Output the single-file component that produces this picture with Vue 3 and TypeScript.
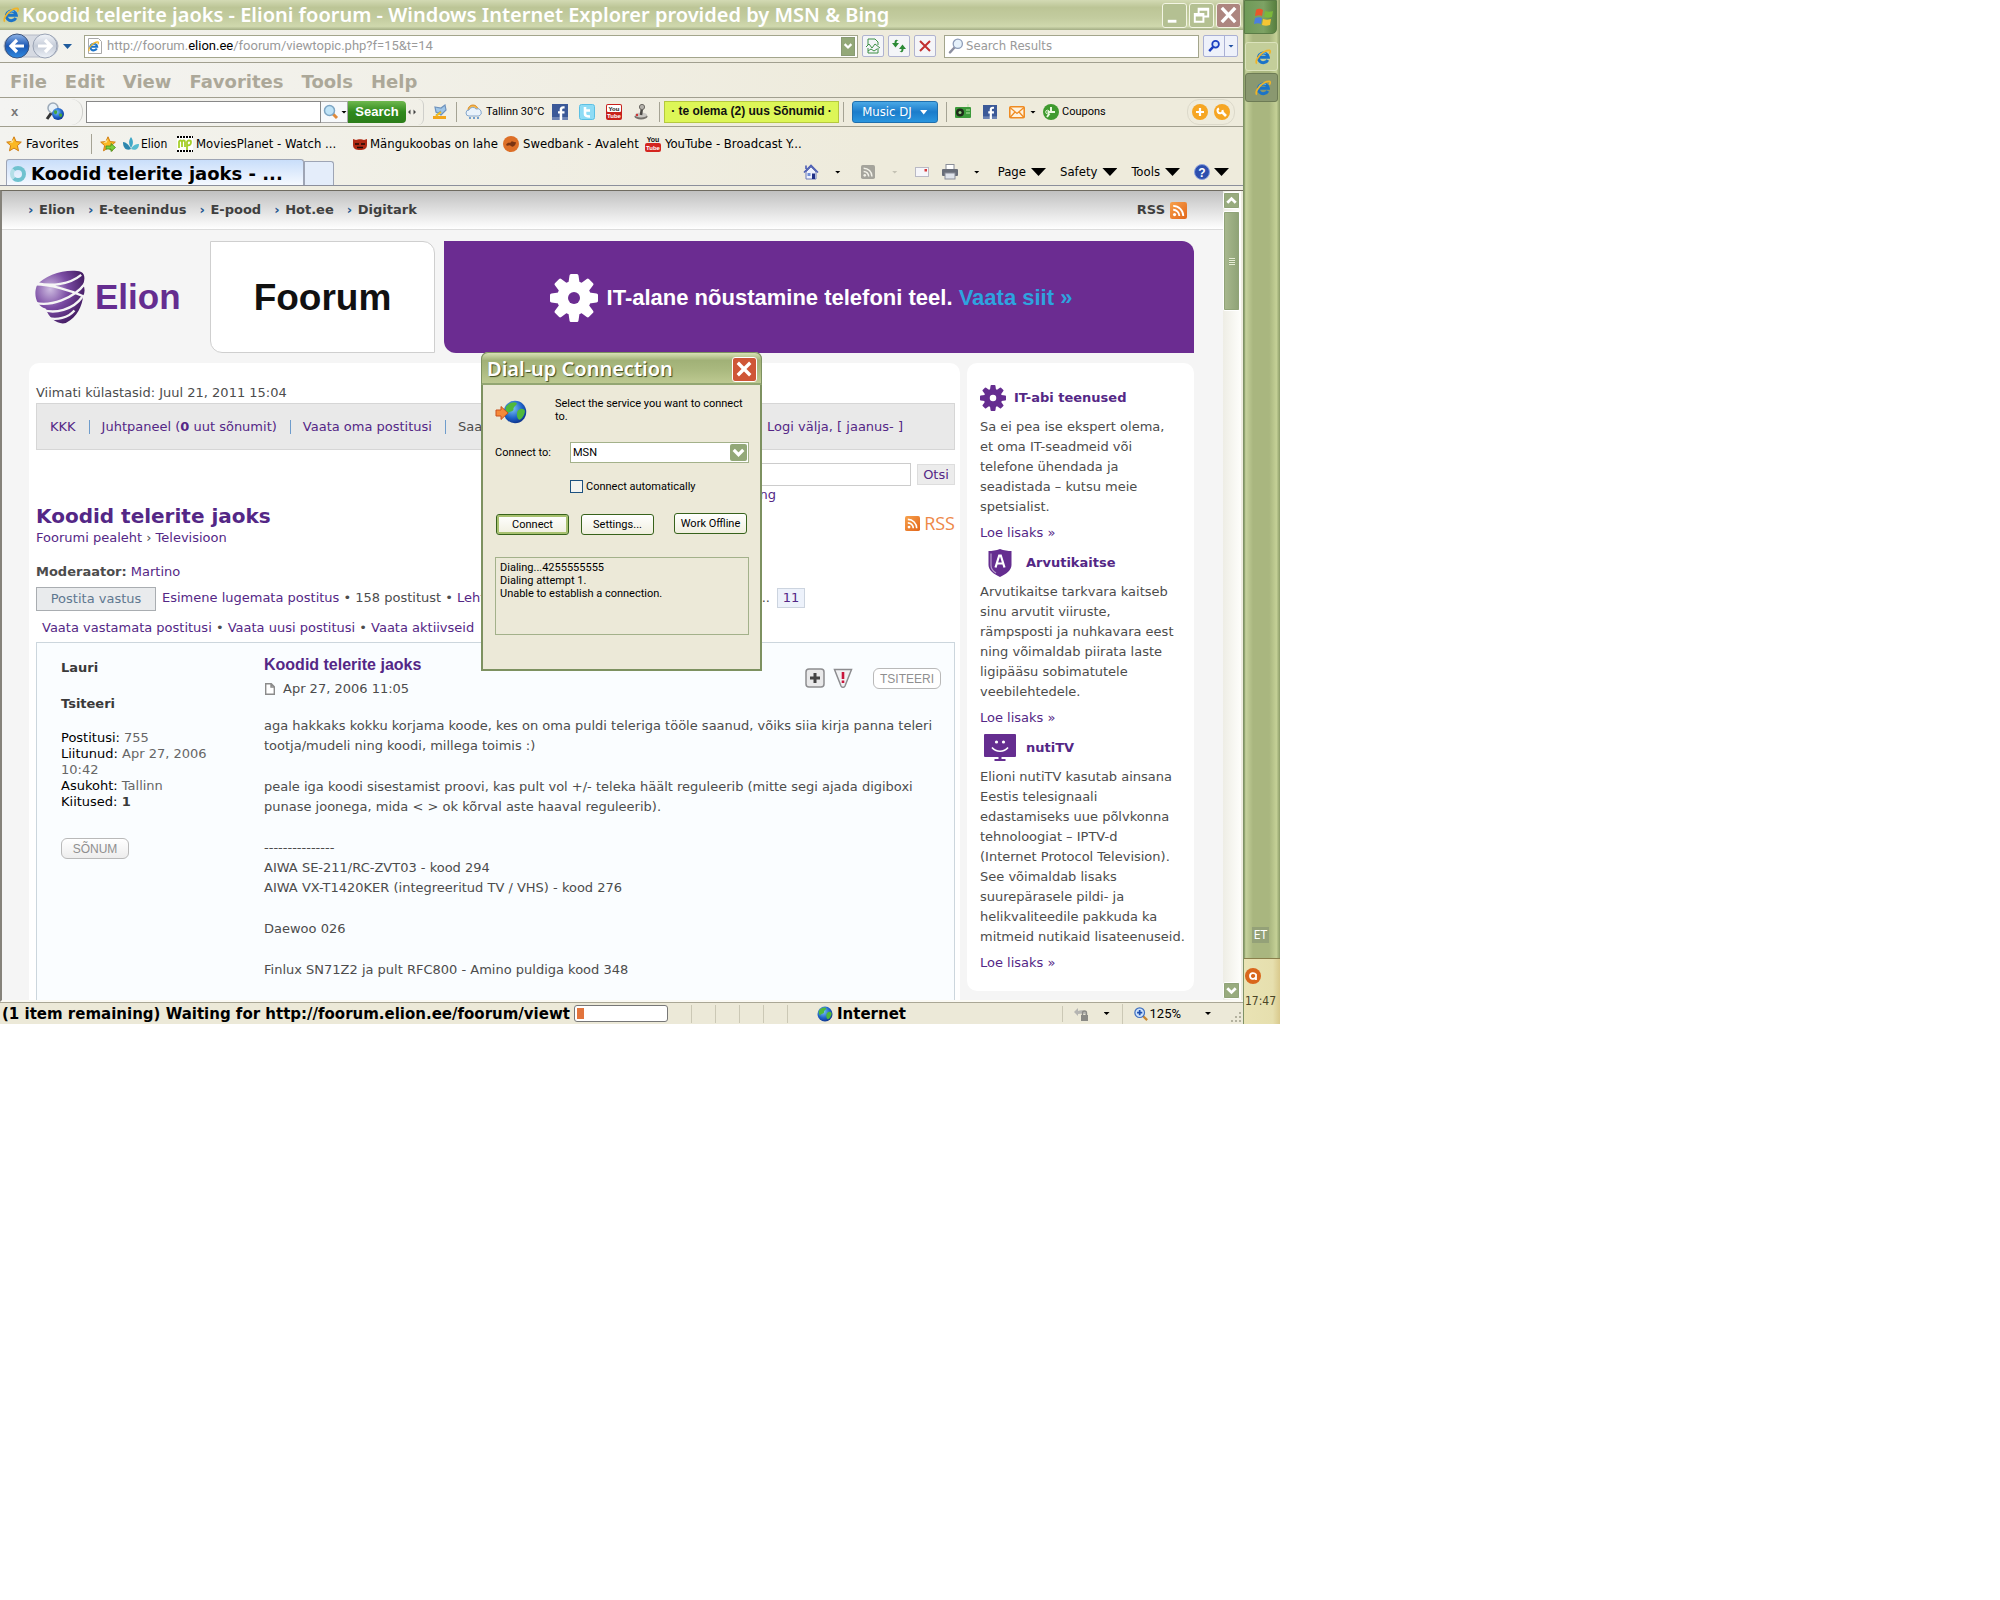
<script setup lang="ts">
import { ref } from 'vue'

interface Service {
  title: string
  icon: string
  wide: boolean
  lines: string[]
}

const menus = ['File', 'Edit', 'View', 'Favorites', 'Tools', 'Help']
const siteLinks = ['Elion', 'E-teenindus', 'E-pood', 'Hot.ee', 'Digitark']
const commands = ['Page', 'Safety', 'Tools']

const services: Service[] = [
  {
    title: 'IT-abi teenused',
    icon: 'i-gear',
    wide: false,
    lines: ['Sa ei pea ise ekspert olema,', 'et oma IT-seadmeid või', 'telefone ühendada ja', 'seadistada – kutsu meie', 'spetsialist.'],
  },
  {
    title: 'Arvutikaitse',
    icon: 'i-shield',
    wide: true,
    lines: ['Arvutikaitse tarkvara kaitseb', 'sinu arvutit viiruste,', 'rämpsposti ja nuhkavara eest', 'ning võimaldab piirata laste', 'ligipääsu sobimatutele', 'veebilehtedele.'],
  },
  {
    title: 'nutiTV',
    icon: 'i-tv',
    wide: true,
    lines: ['Elioni nutiTV kasutab ainsana', 'Eestis telesignaali', 'edastamiseks uue põlvkonna', 'tehnoloogiat – IPTV-d', '(Internet Protocol Television).', 'See võimaldab lisaks', 'suurepärasele pildi- ja', 'helikvaliteedile pakkuda ka', 'mitmeid nutikaid lisateenuseid.'],
  },
]

const postParagraphs: string[][] = [
  ['aga hakkaks kokku korjama koode, kes on oma puldi teleriga tööle saanud, võiks siia kirja panna teleri', 'tootja/mudeli ning koodi, millega toimis :)'],
  ['peale iga koodi sisestamist proovi, kas pult vol +/- teleka häält reguleerib (mitte segi ajada digiboxi', 'punase joonega, mida < > ok kõrval aste haaval reguleerib).'],
  ['---------------', 'AIWA SE-211/RC-ZVT03 - kood 294', 'AIWA VX-T1420KER (integreeritud TV / VHS) - kood 276'],
  ['Daewoo 026'],
  ['Finlux SN71Z2 ja pult RFC800 - Amino puldiga kood 348'],
]

const url = ref('')
const query = ref('')
const forumQuery = ref('')
const service = ref('MSN')
const autoConnect = ref(false)
</script>

<template>
  <svg class="defs" aria-hidden="true">
    <defs>
      <linearGradient id="g-blue" x1="0" y1="0" x2="0" y2="1"><stop offset="0" stop-color="#8fb4e8" /><stop offset=".5" stop-color="#1b57b4" /><stop offset="1" stop-color="#2f8be0" /></linearGradient>
      <linearGradient id="g-grey" x1="0" y1="0" x2="0" y2="1"><stop offset="0" stop-color="#f2f5fa" /><stop offset=".5" stop-color="#c5ccd8" /><stop offset="1" stop-color="#eef2f8" /></linearGradient>
      <linearGradient id="g-orange" x1="0" y1="0" x2="1" y2="1"><stop offset="0" stop-color="#f7a14c" /><stop offset="1" stop-color="#e2661a" /></linearGradient>
      <radialGradient id="g-globe" cx=".4" cy=".35" r=".7"><stop offset="0" stop-color="#7cc4f5" /><stop offset=".6" stop-color="#1e62c8" /><stop offset="1" stop-color="#0c2f86" /></radialGradient>
      <radialGradient id="g-elion" cx=".3" cy=".35" r=".8"><stop offset="0" stop-color="#cdbbe0" /><stop offset=".45" stop-color="#7a4ba3" /><stop offset="1" stop-color="#3a1457" /></radialGradient>
    </defs>
    <symbol id="i-ie" viewBox="0 0 16 16">
      <path d="M12.800 11A5 4.800 0 1 1 13.300 8.300H5" fill="none" stroke="#1b73c8" stroke-width="3" />
      <path d="M4 6.500C5 3.800 9 3.200 11 4.600" fill="none" stroke="#5bb8f0" stroke-width="1.200" />
      <path d="M1.800 14.600C-.8 11.500 7.500 1 14.400 1.300c1.200.5.9 2-.1 3.500" fill="none" stroke="#f0b429" stroke-width="1.700" />
    </symbol>
    <symbol id="i-rss" viewBox="0 0 16 16">
      <rect width="16" height="16" rx="2" fill="url(#g-orange)" />
      <circle cx="4.300" cy="11.800" r="1.500" fill="#fff" />
      <path d="M3 7.300a5.800 5.800 0 0 1 5.800 5.800M3 3.600a9.500 9.500 0 0 1 9.500 9.500" fill="none" stroke="#fff" stroke-width="1.700" />
    </symbol>
    <symbol id="i-rss-grey" viewBox="0 0 16 16">
      <rect width="16" height="16" rx="2" fill="#a5a49c" />
      <circle cx="4.300" cy="11.800" r="1.500" fill="#f2f1e8" />
      <path d="M3 7.300a5.800 5.800 0 0 1 5.800 5.800M3 3.600a9.500 9.500 0 0 1 9.500 9.500" fill="none" stroke="#f2f1e8" stroke-width="1.700" />
    </symbol>
    <symbol id="i-lens" viewBox="0 0 16 16">
      <path d="M6.500 9.500 2 14.400" stroke="#8c8fa0" stroke-width="2.400" stroke-linecap="round" />
      <circle cx="9.800" cy="5.800" r="4.600" fill="#e6f1fa" stroke="#8d9cb8" stroke-width="1.300" />
    </symbol>
    <symbol id="i-lens-blue" viewBox="0 0 16 16">
      <path d="M7 9 2.500 13.800" stroke="#1c3fc0" stroke-width="2.800" />
      <circle cx="9.800" cy="6" r="3.800" fill="#d8e6fb" stroke="#1c3fc0" stroke-width="2" />
    </symbol>
    <symbol id="i-star" viewBox="0 0 16 16">
      <path d="m8 .8 2.100 4.800 5.200.5-3.900 3.500 1.100 5.200L8 12.100l-4.500 2.700 1.100-5.200L.7 6.100l5.200-.5z" fill="#fbb822" stroke="#d07d12" />
      <path d="M8 3 6.800 6.500 3.500 7z" fill="#fde69a" />
    </symbol>
    <symbol id="i-globe" viewBox="0 0 16 16">
      <circle cx="8" cy="8" r="7.500" fill="url(#g-globe)" />
      <path d="M2 4.500C4 1.500 8 .8 9 2S6.800 4 7 6 3.500 7.500 3.500 9 1 8 2 4.500zM10 7c2-2 4-1 4.500 0S13.500 12 11.500 13 8.500 9 10 7z" fill="#4fb83c" />
    </symbol>
    <symbol id="i-fb" viewBox="0 0 16 16">
      <rect width="16" height="16" fill="#3b5998" />
      <rect y="13" width="16" height="3" fill="#6d84b4" />
      <path d="M10.200 16V9.600h2.300V7.200h-2.300V5.500c0-.8.5-1.200 2.400-1.100V2.200C9 1.800 7.700 3.200 7.700 5.300v1.900H6v2.400h1.700V16z" fill="#fff" />
    </symbol>
    <symbol id="i-gear" viewBox="0 0 48 48">
      <circle cx="24" cy="24" r="17" />
      <path v-for="a in [0, 45, 90, 135, 180, 225, 270, 315]" :key="a" d="M18 12 19.500 1.500Q19.700 0 21 0h6q1.300 0 1.500 1.500L30 12z" :transform="`rotate(${a} 24 24)`" />
      <circle cx="24" cy="24" r="6" fill="var(--hole)" />
    </symbol>
    <symbol id="i-shield" viewBox="0 0 24 28">
      <path d="M12 0c4 1.500 8 2 11.500 2v14c0 5-5 9-11.500 12C5.500 25 .5 21 .5 16V2C4 2 8 1.500 12 0z" />
      <path d="M3 4.500v12c0 3 2 5.500 5 7.500" fill="none" stroke="#b79ccb" stroke-width="1.200" />
      <path d="m7.500 18.500 3.700-12h1.600l3.700 12M9 14.500h6" fill="none" stroke="#fff" stroke-width="2.200" />
    </symbol>
    <symbol id="i-tv" viewBox="0 0 32 28">
      <rect width="32" height="23" rx="1" />
      <path d="M14.500 22h3v3h4v2h-11v-2h4z" />
      <circle cx="12.500" cy="8" r="1.600" fill="#fff" /><circle cx="19.500" cy="8" r="1.600" fill="#fff" />
      <path d="M8 13.500c4 5 12 5 16 0" fill="none" stroke="#fff" stroke-width="1.600" />
    </symbol>
    <symbol id="i-chev" viewBox="0 0 16 16">
      <path d="m3.500 5.500 4.500 4.500 4.500-4.500" fill="none" stroke="#fff" stroke-width="3" />
    </symbol>
  </svg>

  <div class="desktop">
    <div class="browser">
      <header class="titlebar">
        <svg class="ic16"><use href="#i-ie" /></svg>
        <h1>Koodid telerite jaoks - Elioni foorum - Windows Internet Explorer provided by MSN &amp; Bing</h1>
        <button class="win" aria-label="Minimize"><svg viewBox="0 0 24 24"><path d="M5 18h9" stroke="#fff" stroke-width="3" /></svg></button>
        <button class="win" aria-label="Restore"><svg viewBox="0 0 24 24"><path d="M9 10V5h10v8h-4M9 6h10M5 10.500h9v8H5zM5 12h9" fill="none" stroke="#fff" stroke-width="2" /></svg></button>
        <button class="win close" aria-label="Close"><svg viewBox="0 0 24 24"><path d="m5 4 14 15M19 4 5 19" stroke="#fff" stroke-width="3.500" /></svg></button>
      </header>

      <div class="addressbar">
        <svg class="nav" viewBox="0 0 72 28">
          <rect x="2" y="3" width="54" height="22" rx="11" fill="#d6dae2" stroke="#b5bac6" />
          <circle cx="15" cy="14" r="12" fill="url(#g-blue)" stroke="#3c557f" />
          <path d="M22 14H9m6-6-6 6 6 6" fill="none" stroke="#fff" stroke-width="3.200" />
          <circle cx="43" cy="14" r="12" fill="url(#g-grey)" stroke="#9aa3b4" />
          <path d="M36 14h13m-6-6 6 6-6 6" fill="none" stroke="#fff" stroke-width="3.200" />
          <path d="M61 12h9l-4.500 5z" fill="#1f5b9c" />
        </svg>
        <div class="url field">
          <svg class="ic16" viewBox="0 0 16 16"><path d="M1.500.5h10l3 3v12h-13z" fill="#fff" stroke="#a9a9a9" /><use href="#i-ie" x="1" y="3" width="11" height="11" /></svg>
          <label class="url-text"><span>http://foorum.<b>elion.ee</b>/foorum/viewtopic.php?f=15&amp;t=14</span><input v-model="url" aria-label="Address" /></label>
          <button class="drop" aria-label="Show address list"><svg><use href="#i-chev" /></svg></button>
        </div>
        <button class="tool" aria-label="Compatibility view"><svg viewBox="0 0 16 16"><path d="M3 7V1h7l3 3v3M3 10v5h10v-5M1 9l3-3 3 4 3-4 5 4M3 13l3-2 3 2 3-2" fill="none" stroke="#3d8f45" /></svg></button>
        <button class="tool" aria-label="Refresh"><svg viewBox="0 0 16 16"><path d="M7.500 2.500C5.500 2.500 5.500 4 5.500 5H8L4.500 9.500 1 5h2.500C3.500 2 5 1 7.500 2.500zM8.500 13.500c2 0 2-1.500 2-2.500H8l3.500-4.500L15 11h-2.500c0 3-1.500 4-4 2.500z" fill="#2b8a35" /></svg></button>
        <button class="tool" aria-label="Stop"><svg viewBox="0 0 16 16"><path d="m3 3 10 10M13 3 3 13" stroke="#c22f2f" stroke-width="2" /></svg></button>
        <div class="search field">
          <svg class="ic16"><use href="#i-lens" /></svg>
          <input v-model="query" placeholder="Search Results" aria-label="Search Results" />
        </div>
        <div class="go">
          <button aria-label="Search"><svg class="ic14"><use href="#i-lens-blue" /></svg></button>
          <button class="more" aria-label="Search options"><i class="tri blue"></i></button>
        </div>
      </div>

      <nav class="menubar">
        <a v-for="m in menus" :key="m" href="#">{{ m }}</a>
      </nav>

      <div class="toolbar">
        <button class="x" aria-label="Close toolbar">x</button>
        <svg class="bing" viewBox="0 0 22 20"><path d="M8 10 3 17" stroke="#333" stroke-width="3" /><circle cx="9" cy="6" r="5" fill="#e8f1f8" stroke="#9ba9b8" stroke-width="1.500" /><circle cx="14" cy="12" r="6" fill="url(#g-globe)" /><path d="M10 9c2-2 4 0 3 2s-3 2-3-2zM15 12c2-1 4 0 3 2s-3 1-3-2z" fill="#46a53a" /></svg>
        <span class="bracket"></span>
        <div class="tb-search">
          <input aria-label="Toolbar search" />
          <button class="kind" aria-label="Search type"><svg viewBox="0 0 16 16" class="ic16"><path d="m9 9 5 5" stroke="#e08a3a" stroke-width="3" /><circle cx="6.500" cy="6.500" r="5" fill="#bfe3f7" stroke="#7ea6c4" stroke-width="1.500" /></svg><i class="tri"></i></button>
          <button class="green">Search</button>
        </div>
        <svg class="grip" viewBox="0 0 12 8"><path d="M4.500 1.500 2 4l2.500 2.500zM7.500 1.500 10 4 7.500 6.500z" fill="#444" /></svg>
        <span class="bracket short"></span>
        <svg class="marker" viewBox="0 0 16 16"><path d="M1 13.500h13" stroke="#f3a61c" stroke-width="3" /><path d="m4 11 5-4M3 3l6 1 4-3 1 5-5 5-5-3z" fill="#9fc6e8" stroke="#6f93bd" stroke-width="1.200" /><path d="m4 12 5-4" stroke="#f3c01c" stroke-width="2" /></svg>
        <i class="bar"></i>
        <svg class="weather" viewBox="0 0 18 16"><circle cx="8" cy="6" r="5" fill="#f6b94e" stroke="#d98b25" /><path d="M4 12a3 3 0 0 1 0-6 4 4 0 0 1 7-1 3.500 3.500 0 0 1 3 7z" fill="#e9f2fb" stroke="#86a7cc" /><path d="M5 13v2M9 13v2M13 13v2" stroke="#4c86c6" stroke-width="1.500" /></svg>
        <span class="temp">Tallinn 30°C</span>
        <svg class="ic16 s1"><use href="#i-fb" /></svg>
        <svg class="ic16 s2" viewBox="0 0 16 16"><rect x=".5" y=".5" width="15" height="15" rx="2" fill="#8fdcf5" stroke="#5cc0e4" /><path d="M6 3v7c0 2 1.500 2.500 5 2.500M6 6.500h5" fill="none" stroke="#fff" stroke-width="2.600" /></svg>
        <svg class="ic16 s2" viewBox="0 0 16 16"><rect width="16" height="16" rx="2" fill="#c8201c" /><rect x="1" y="1" width="14" height="7" rx="1" fill="#fff" /><text x="8" y="7" font-size="6" fill="#111" class="yt">You</text><text x="8" y="14" font-size="6" fill="#fff" class="yt">Tube</text></svg>
        <svg class="ic16 s2" viewBox="0 0 16 16"><ellipse cx="8" cy="12.500" rx="6.500" ry="3" fill="#76736d" /><ellipse cx="8" cy="11" rx="6" ry="2.500" fill="#c9c7c2" /><path d="m8 11 1-7" stroke="#4c4a46" stroke-width="2.500" /><circle cx="9" cy="3" r="2.600" fill="#b5b2ac" stroke="#6c6963" /><circle cx="4" cy="11" r="1.200" fill="#c33" /></svg>
        <i class="bar b2"></i>
        <a class="notice" href="#">· te olema (2) uus Sõnumid ·</a>
        <i class="bar b3"></i>
        <button class="music">Music DJ <i class="tri white"></i></button>
        <i class="bar b4"></i>
        <svg class="ic16 s3" viewBox="0 0 16 16"><rect x="0" y="3" width="16" height="11" rx="1" fill="#3c9a3b" /><circle cx="5" cy="8.500" r="4" fill="#1f2a1b" /><circle cx="5" cy="8.500" r="1.500" fill="#8fd07c" /><path d="M11 6h4M11 9h4M13 3V0" stroke="#b8e6a6" /></svg>
        <svg class="ic14 s4"><use href="#i-fb" /></svg>
        <svg class="ic16 s4" viewBox="0 0 16 16"><rect x=".8" y="2.800" width="14.400" height="11" rx="1" fill="#fff3df" stroke="#ef8b22" stroke-width="1.600" /><path d="m1 3.500 7 6 7-6M1 13.500 6 8M15 13.500 10 8" fill="none" stroke="#ef8b22" stroke-width="1.300" /></svg>
        <i class="tri"></i>
        <svg class="ic16 s5" viewBox="0 0 16 16"><circle cx="8" cy="8" r="8" fill="#3f9a2f" /><path d="M8 3v6M4.500 8h7.500M6.500 9.500 4 13" stroke="#e9f9df" stroke-width="2" /><circle cx="4.500" cy="8" r="1.800" fill="none" stroke="#e9f9df" /></svg>
        <span class="coupons">Coupons</span>
        <div class="orbs">
          <svg class="ic16" viewBox="0 0 16 16"><circle cx="8" cy="8" r="8" fill="#f6a623" /><path d="M8 4v8M4 8h8" stroke="#fff" stroke-width="2.200" /></svg>
          <svg class="ic16" viewBox="0 0 16 16"><circle cx="8" cy="8" r="8" fill="#f6a623" /><path d="m8 8 4 4" stroke="#fff" stroke-width="2.600" /><path d="M5 4.500A2.500 2.500 0 1 0 8.500 6" fill="none" stroke="#fff" stroke-width="2" /></svg>
        </div>
      </div>

      <div class="favbar">
        <a href="#" class="fav"><svg class="ic16"><use href="#i-star" /></svg>Favorites</a>
        <i class="bar"></i>
        <svg class="ic16 add" viewBox="0 0 16 16"><use href="#i-star" /><path d="M6 10h5V7.500l4.500 4-4.500 4V13H6z" fill="#7ccf3a" stroke="#3f8e1c" stroke-width=".8" /></svg>
        <a href="#" class="fav f1"><svg class="ic16" viewBox="0 0 16 16"><path d="M8 1c3 4 2 8 0 11C6 9 5 5 8 1z" fill="#3fa7c6" /><path d="M0 6c3 0 6 3 8 7-4 2-8 0-8-7z" fill="#2c86ad" /><path d="M16 8c-3 0-6 1-8 5 4 2 8 0 8-5z" fill="#57bcd0" /></svg>Elion</a>
        <a href="#" class="fav f2"><svg class="ic16" viewBox="0 0 16 16"><rect width="16" height="16" fill="#fff" /><path d="M0 1h16M0 15h16" stroke="#000" stroke-width="2" stroke-dasharray="2 1" /><path d="M2 12V6c0-2 3-2 3 0v5V6c0-2 3-2 3 0v5M10 14V6c0-2 4-2 4 0s-1 4-4 3" fill="none" stroke="#a6cf2a" stroke-width="1.800" /></svg>MoviesPlanet - Watch ...</a>
        <a href="#" class="fav f3"><svg class="ic16" viewBox="0 0 16 16"><path d="M1 3l3 1c2-1 6-1 8 0l3-1v6c0 4-3 5-7 5s-7-1-7-5z" fill="#b02a14" /><path d="M3 8h4M9 8h4M5 11.500h6" stroke="#1c0a06" stroke-width="1.500" /></svg>Mängukoobas on lahe</a>
        <a href="#" class="fav f4"><svg class="ic16" viewBox="0 0 16 16"><circle cx="8" cy="8" r="8" fill="#dd6f27" /><path d="M3 9c2-4 4-1 5-3s3 1 5 0c0 3-3 6-5 4s-3 1-5-1z" fill="#7a3412" /></svg>Swedbank - Avaleht</a>
        <a href="#" class="fav f5"><svg class="ic16" viewBox="0 0 16 16"><text x="8" y="6" font-size="7" fill="#111" class="yt">You</text><rect y="7" width="16" height="9" rx="2" fill="#d4251f" /><text x="8" y="14" font-size="6" fill="#fff" class="yt">Tube</text></svg>YouTube - Broadcast Y...</a>
      </div>

      <div class="tabrow">
        <div class="tab"><i class="ring"></i><span>Koodid telerite jaoks - ...</span></div>
        <div class="newtab"></div>
        <div class="cmds">
          <svg class="ic16" viewBox="0 0 16 16"><path d="M3 8v7h10V8L8 3z" fill="#eef1fb" stroke="#6d7ab8" /><path d="M1 8.500 8 1.500l7 7M3 5V1.500" fill="none" stroke="#4a5cb4" stroke-width="1.600" /><rect x="9" y="9.500" width="3" height="5.500" fill="#1e2f86" /><rect x="4.500" y="9" width="3" height="3" fill="#6f8ed6" /></svg>
          <i class="tri c1"></i>
          <svg class="ic14 c2"><use href="#i-rss-grey" /></svg>
          <i class="tri c3 dim"></i>
          <svg class="ic14 c4" viewBox="0 0 14 14"><rect x=".5" y="2.500" width="13" height="9" fill="#f6f6fa" stroke="#b9b9c4" /><rect x="9.500" y="4" width="2.500" height="2.500" fill="#d6383a" /></svg>
          <svg class="ic16 c5" viewBox="0 0 16 16"><rect x="4" y=".5" width="8" height="6" fill="#fff" stroke="#8a8e98" /><rect x="0" y="5" width="16" height="7" rx="1" fill="#686d78" /><rect x="3" y="9" width="10" height="6" fill="#dfe3ea" stroke="#8a8e98" /></svg>
          <i class="tri c6"></i>
          <button v-for="c in commands" :key="c" class="cmd">{{ c }}<i class="tri big"></i></button>
          <button class="cmd help" aria-label="Help"><svg class="ic16" viewBox="0 0 16 16"><circle cx="8" cy="8" r="7.500" fill="#2d4fae" stroke="#8aa0dd" /><text x="8" y="12.500" font-size="12" fill="#fff" class="yt">?</text></svg><i class="tri big"></i></button>
        </div>
      </div>

      <div class="viewport">
        <main class="page">
          <div class="sitebar">
            <a v-for="l in siteLinks" :key="l" href="#"><i>›</i>{{ l }}</a>
            <a class="rss" href="#">RSS <svg><use href="#i-rss" /></svg></a>
          </div>

          <div class="heads">
            <a class="logo" href="#">
              <svg viewBox="0 0 52 56">
                <path d="M2 16C10 5 34-2 48 2c4 2 4 8 2 13 2 4 2 8 0 12-1 10-6 22-18 28-8 2-17-4-21-15C2 38-2 26 2 16z" fill="url(#g-elion)" />
                <path d="M3 14c14 3 33 1 45-9M1 15c14 0 36 6 51 13M0 34c16 4 40-4 52-20M8 41c12 5 32 0 41-13M14 50c9 2 20 0 27-8" fill="none" stroke="#f5f5f5" stroke-width="2.400" />
              </svg>
              <span>Elion</span>
            </a>
            <div class="forum-card">Foorum</div>
            <a class="banner" href="#">
              <svg><use href="#i-gear" /></svg>
              <span>IT-alane nõustamine telefoni teel. <em>Vaata siit »</em></span>
            </a>
          </div>

          <div class="cols">
            <section class="content">
              <p class="visited">Viimati külastasid: Juul 21, 2011 15:04</p>
              <nav class="usernav">
                <a href="#">KKK</a>
                <a href="#">Juhtpaneel (<b>0</b> uut sõnumit)</a>
                <a href="#">Vaata oma postitusi</a>
                <span>Saadetud</span>
                <a class="logout" href="#">Logi välja, [ jaanus- ]</a>
              </nav>
              <form class="forum-search" @submit.prevent>
                <input v-model="forumQuery" aria-label="Otsi" />
                <button>Otsi</button>
              </form>
              <a class="advanced" href="#">Täpsem otsing</a>
              <div class="topic">
                <div>
                  <h2>Koodid telerite jaoks</h2>
                  <p class="crumbs"><a href="#">Foorumi pealeht</a> › <a href="#">Televisioon</a></p>
                </div>
                <a class="feed" href="#"><svg><use href="#i-rss" /></svg>RSS</a>
              </div>
              <p class="mods"><b>Moderaator:</b> <a href="#">Martino</a></p>
              <div class="pager">
                <button>Postita vastus</button>
                <span><a href="#">Esimene lugemata postitus</a> • 158 postitust • <a href="#">Leht</a></span>
                <span class="dots">...</span>
                <a class="num" href="#">11</a>
              </div>
              <p class="views"><a href="#">Vaata vastamata postitusi</a> • <a href="#">Vaata uusi postitusi</a> • <a href="#">Vaata aktiivseid</a></p>

              <article class="post">
                <aside>
                  <b class="author">Lauri</b>
                  <b class="author">Tsiteeri</b>
                  <p>
                    <span>Postitusi:</span> 755<br />
                    <span>Liitunud:</span> Apr 27, 2006<br />10:42<br />
                    <span>Asukoht:</span> Tallinn<br />
                    <span>Kiitused:</span> <b>1</b>
                  </p>
                  <button class="pill">SÕNUM</button>
                </aside>
                <div class="body">
                  <header>
                    <div>
                      <h3>Koodid telerite jaoks</h3>
                      <p class="date"><svg viewBox="0 0 10 12"><path d="M.7.7h5.600l3 3v7.600H.7zM6 1v3h3" fill="#fff" stroke="#8b8b8b" stroke-width="1.400" /></svg>Apr 27, 2006 11:05</p>
                    </div>
                    <div class="actions">
                      <svg class="act" viewBox="0 0 20 20"><rect x="1" y="1" width="18" height="18" rx="3" fill="#e9e9ea" stroke="#8d8d90" stroke-width="1.500" /><path d="M10 5v10M5 10h10" stroke="#444" stroke-width="3" /></svg>
                      <svg class="act" viewBox="0 0 20 20"><path d="M1.500 1.500h17L12 18a2.200 2.200 0 0 1-4 0z" fill="#f1f1f3" stroke="#8d8d90" stroke-width="1.500" /><path d="M10 4v7M10 12.500v2.500" stroke="#c8143c" stroke-width="2.600" /></svg>
                      <button class="pill">TSITEERI</button>
                    </div>
                  </header>
                  <p v-for="(lines, i) in postParagraphs" :key="i" class="para">
                    <template v-for="line in lines" :key="line">{{ line }}<br /></template>
                  </p>
                </div>
              </article>
            </section>

            <aside class="side">
              <section v-for="s in services" :key="s.title" :class="{ wide: s.wide }">
                <h4><svg><use :href="'#' + s.icon" /></svg>{{ s.title }}</h4>
                <p><template v-for="line in s.lines" :key="line">{{ line }}<br /></template></p>
                <a href="#">Loe lisaks »</a>
              </section>
            </aside>
          </div>
        </main>
        <div class="scroll">
          <button class="sb" aria-label="Scroll up"><svg class="up"><use href="#i-chev" /></svg></button>
          <div class="thumb"><i></i></div>
          <button class="sb end" aria-label="Scroll down"><svg><use href="#i-chev" /></svg></button>
        </div>
      </div>

      <footer class="status">
        <span class="msg">(1 item remaining) Waiting for http://foorum.elion.ee/foorum/viewt</span>
        <span class="progress"><i></i></span>
        <i v-for="n in 5" :key="n" class="sep"></i>
        <span class="zone"><svg class="ic16"><use href="#i-globe" /></svg>Internet</span>
        <span class="protect"><svg class="ic16" viewBox="0 0 16 16"><path d="M1 6l4-4v3c6-2 9 1 9 5-2-3-5-3-9-2v2z" fill="#b5b5b2" /><rect x="8" y="9" width="7" height="6" fill="#8a8a86" /><path d="M9.500 9V7a2 2 0 0 1 4 0v2" fill="none" stroke="#8a8a86" stroke-width="1.400" /></svg><i class="tri"></i></span>
        <span class="zoom"><svg class="ic14" viewBox="0 0 16 16"><path d="m10 10 5 5" stroke="#c9852f" stroke-width="2.600" /><circle cx="6.500" cy="6.500" r="5.500" fill="#cfe3fb" stroke="#3f6fc0" stroke-width="1.400" /><path d="M6.500 3.500v6M3.500 6.500h6" stroke="#1d4fb0" stroke-width="2" /></svg>125%<i class="tri"></i></span>
        <svg class="size" viewBox="0 0 12 12"><path d="M9 1h2M5 5h2M9 5h2M1 9h2M5 9h2M9 9h2" stroke="#b3b19f" stroke-width="2" /></svg>
      </footer>
    </div>

    <aside class="taskbar">
      <button class="start" aria-label="Start"><svg viewBox="0 0 20 20"><path d="M2 3c3-2 5-1 7 0L8 9C6 8 4 8 1 9z" fill="#e8562a" /><path d="M11 4c3 1 5 1 8 0l-1 6c-3 1-5 1-8 0z" fill="#7cb83a" /><path d="M1 11c3-1 5-1 7 0l-1 6c-2-1-4-1-7 0z" fill="#4a7fe0" /><path d="M9 12c3 1 5 1 8 0l-1 6c-3 1-5 1-8 0z" fill="#f6c634" /></svg></button>
      <button class="task" aria-label="Internet Explorer"><svg class="ic16"><use href="#i-ie" /></svg></button>
      <button class="task on" aria-label="Internet Explorer, active"><svg class="ic16"><use href="#i-ie" /></svg></button>
      <span class="lang">ET</span>
      <div class="tray">
        <svg class="ic16" viewBox="0 0 16 16"><circle cx="8" cy="8" r="8" fill="#d9661c" /><path d="M11 12V6.500C9 4 5 5 5 8s4 4 5.500 1.500" fill="none" stroke="#fff" stroke-width="1.800" /></svg>
        <time>17:47</time>
      </div>
    </aside>

    <div class="dialog" role="dialog" aria-label="Dial-up Connection">
      <header>
        <h2>Dial-up Connection</h2>
        <button aria-label="Close"><svg viewBox="0 0 24 24"><path d="m5 5 13 13M18 5 5 18" stroke="#fff" stroke-width="3.500" /></svg></button>
      </header>
      <div class="dlg">
        <div class="intro">
          <svg viewBox="0 0 32 26"><use href="#i-globe" x="8" y="0" width="24" height="24" /><path d="M1 10h5V6.500l7 6.500-7 6.500V16H1z" fill="#f58a3a" stroke="#c9501c" /></svg>
          <p>Select the service you want to connect to.</p>
        </div>
        <div class="row">
          <label for="svc">Connect to:</label>
          <span class="select"><select id="svc" v-model="service"><option>MSN</option></select><i><svg><use href="#i-chev" /></svg></i></span>
        </div>
        <label class="check"><input v-model="autoConnect" type="checkbox" />Connect automatically</label>
        <div class="btns">
          <button class="def">Connect</button>
          <button>Settings...</button>
          <button class="last">Work Offline</button>
        </div>
        <div class="log">Dialing...4255555555<br />Dialing attempt 1.<br />Unable to establish a connection.</div>
      </div>
    </div>
  </div>
</template>

<style>
body { background: #fff; }
</style>

<style scoped>
* { box-sizing: border-box; }
p, h1, h2, h3, h4 { margin: 0; }
button { padding: 0; border: 0; background: none; font: inherit; color: inherit; flex: none; }
input { min-width: 0; border: 0; padding: 0; background: none; font: inherit; outline: 0; }
a { color: #542786; text-decoration: none; }
svg { flex: none; display: block; }
.defs { position: absolute; width: 0; height: 0; }
.ic16 { width: 16px; height: 16px; }
.ic14 { width: 14px; height: 14px; }
.yt { font-family: "Liberation Sans", sans-serif; font-weight: 700; text-anchor: middle; }
.tri { flex: none; display: block; width: 6px; height: 3px; background: #000; clip-path: polygon(0 0, 100% 0, 50% 100%); }
.tri.big { width: 15px; height: 8px; }
.tri.white { width: 8px; height: 5px; background: #fff; }
.tri.blue { background: #1f4fa0; }
.tri.dim { background: #c4c2b4; }
.bar { flex: none; width: 1px; height: 20px; background: #a5a394; }

.desktop { position: relative; display: flex; width: 64vw; font: 13px/20px "DejaVu Sans", Verdana, sans-serif; color: #4c4c4c; }
.browser { flex: 1; min-width: 0; background: #efede0; border-right: 1px solid #7f9266; }

.titlebar { display: flex; align-items: center; height: 30px; padding: 0 2px 0 3px; background: linear-gradient(#d3dab4, #bcc596 25%, #c3cc9f 60%, #cfd8ad 88%, #a3ad84); }
.titlebar h1 { flex: 1; margin-left: 3px; font: 600 20px/28px "Noto Sans", sans-serif; color: #fff; white-space: nowrap; }
.win { width: 25px; height: 25px; margin-left: 2px; border: 1px solid #f3f5e4; border-radius: 3px; background: #b4c092; }
.win.close { background: #ad8680; }

.addressbar { display: flex; align-items: center; height: 33px; padding: 0 5px 0 2px; border-bottom: 1px solid #a19f8f; background: linear-gradient(90deg, #f3f3ef, #eeebdc 70%); }
.nav { width: 72px; height: 28px; }
.field { display: flex; align-items: center; height: 23px; border: 1px solid #a3a58c; background: #fff; }
.url { flex: 1; margin-left: 10px; padding: 0 2px; }
.url-text { position: relative; flex: 1; margin-left: 4px; font: 13px/20px Roboto, sans-serif; color: #9a9a9a; white-space: nowrap; }
.url-text b { font-weight: 400; color: #000; }
.url-text input { position: absolute; inset: 0; width: 100%; }
.drop { width: 14px; height: 19px; background: #93a878; border: 1px solid #8a9a74; }
.drop svg { width: 12px; height: 16px; }
.tool { display: grid; place-items: center; width: 22px; height: 22px; margin-left: 4px; border: 1px solid #b0b3cf; border-radius: 2px; background: #f4f5f8; }
.tool svg { width: 16px; height: 16px; }
.search { width: 255px; margin-left: 8px; padding: 0 3px; }
.search input { flex: 1; margin-left: 2px; font: 13px/20px "DejaVu Sans Condensed", Tahoma, sans-serif; }
.search input::placeholder { color: #999; opacity: 1; }
.go { display: flex; height: 22px; margin-left: 4px; border: 1px solid #aab0d4; border-radius: 2px; background: #eef1fa; }
.go button { display: grid; place-items: center; width: 20px; }
.go .more { width: 13px; border-left: 1px solid #aab0d4; }

.menubar { display: flex; align-items: center; gap: 18px; height: 35px; padding: 4px 10px 0; border-bottom: 1px solid #a19f8f; background: linear-gradient(90deg, #f4f4f2, #eeebdc 70%); font: 700 18px/24px "DejaVu Sans", sans-serif; }
.menubar a { color: #aca899; }

.toolbar { display: flex; align-items: center; height: 29px; padding: 0 8px 0 10px; border-bottom: 1px solid #a19f8f; background: linear-gradient(90deg, #f4f4f2, #eeebdc 70%); font: 12px/16px "DejaVu Sans Condensed", Tahoma, sans-serif; color: #000; }
.x { width: 9px; font: 700 13px/16px "Liberation Sans", sans-serif; color: #777; }
.bing { width: 22px; height: 20px; margin-left: 25px; }
.bracket { width: 17px; height: 26px; border-right: 1px solid #cfcfcb; border-radius: 0 12px 12px 0; }
.bracket.short { width: 6px; }
.tb-search { display: flex; height: 22px; margin-left: 3px; }
.tb-search input { width: 235px; border: 1px solid #888; background: #fff; }
.kind { display: flex; align-items: center; gap: 2px; width: 27px; padding-left: 2px; border: 1px solid #aaa; border-left: 0; background: #f7f9fb; }
.green { width: 58px; border-radius: 0 4px 4px 0; background: linear-gradient(#6fb84f, #2f8a1c 50%, #2c7d19); font: 700 13px/20px "Liberation Sans", sans-serif; color: #fff; }
.grip { width: 12px; height: 8px; }
.marker { width: 16px; height: 16px; margin-left: 8px; }
.toolbar > .bar { margin-left: 8px; }
.weather { width: 18px; height: 16px; margin-left: 8px; }
.temp { width: 63px; margin-left: 3px; font-family: Roboto, sans-serif; font-size: 11px; white-space: nowrap; }
.s1 { margin-left: 3px; }
.s2 { margin-left: 11px; }
.toolbar > .b2 { margin-left: 10px; }
.notice { width: 175px; height: 22px; margin-left: 4px; border: 1px solid #b5c93e; background: #ddf657; font: 700 12px/19px "Liberation Sans", sans-serif; color: #111; text-align: center; }
.toolbar > .b3 { margin-left: 4px; }
.music { display: flex; align-items: center; justify-content: center; gap: 8px; width: 86px; height: 22px; margin-left: 8px; border-radius: 3px; background: linear-gradient(#4aa9e6, #1b7ccb 50%, #2a95de); color: #fff; font-size: 13px; border: 1px solid #1f6fae; }
.s3 { margin-left: 8px; }
.s4 { margin-left: 12px; }
.s4 + .tri { margin-left: 5px; }
.s5 { margin-left: 7px; }
.coupons { margin-left: 3px; font-family: Roboto, sans-serif; font-size: 11px; }
.orbs { display: flex; gap: 6px; margin-left: auto; padding: 4px; border: 1px solid #dcd9ca; border-radius: 12px; }

.favbar { display: flex; align-items: center; height: 33px; padding: 0 8px 0 6px; background: linear-gradient(90deg, #f3f3ef, #eeebdc 70%); }
.fav { display: flex; align-items: center; gap: 4px; color: #000; font: 13px/18px "DejaVu Sans Condensed", Tahoma, sans-serif; white-space: nowrap; }
.fav:first-child { width: 73px; }
.favbar .bar { margin-left: 12px; }
.add { margin-left: 8px; }
.f1 { width: 54px; margin-left: 7px; gap: 2px; font-size: 12px; }
.f2 { width: 160px; gap: 3px; }
.f3 { width: 147px; margin-left: 15px; gap: 2px; }
.f4 { width: 136px; margin-left: 4px; }
.f5 { margin-left: 6px; }

.tabrow { display: flex; align-items: flex-end; height: 26px; padding-left: 6px; border-bottom: 1px solid #8b8f9c; background: linear-gradient(90deg, #f3f3ef, #eeebdc 70%); }
.tab { display: flex; align-items: center; gap: 5px; width: 298px; height: 26px; padding: 2px 0 0 3px; border: 1px solid #9ea5b5; border-bottom: 0; border-radius: 3px 3px 0 0; background: linear-gradient(#c9defa, #f5f9ff); font: 700 18px/24px "DejaVu Sans", sans-serif; color: #000; white-space: nowrap; }
.ring { width: 16px; height: 16px; border: 4px solid #6fc2cf; border-left-color: #b4dfe8; border-radius: 50%; }
.newtab { width: 30px; height: 24px; border: 1px solid #9ea5b5; border-bottom: 0; border-radius: 0 3px 0 0; background: #e4edfa; }
.cmds { display: flex; align-items: center; height: 26px; margin-left: auto; padding-right: 14px; font: 13px/18px "DejaVu Sans Condensed", Tahoma, sans-serif; color: #000; }
.c1 { margin-left: 16px; }
.c2 { margin-left: 20px; }
.c3 { margin-left: 17px; }
.c4 { margin-left: 17px; }
.c5 { margin-left: 13px; }
.c6 { margin: 0 18px 0 16px; }
.cmd { display: flex; align-items: center; gap: 5px; margin-right: 14px; }
.cmd.help { gap: 4px; margin: 0; }

.viewport { display: flex; margin-top: 4px; border-left: 2px solid #85827a; border-top: 1px solid #6f6b60; border-bottom: 2px solid #fbfaf4; }
.page { flex: 1; min-width: 0; background: #f5f5f5; }
.sitebar { display: flex; align-items: center; height: 39px; padding: 0 36px 0 26px; border-bottom: 1px solid #dcdcdc; background: linear-gradient(#c0c0c0, #fff); font-weight: 700; font-size: 13px; }
.sitebar a { display: flex; align-items: center; margin-right: 13px; color: #3f3f3f; }
.sitebar i { width: 11px; font-style: normal; color: #1b5590; }
.sitebar .rss { gap: 5px; margin: 0 0 0 auto; }
.rss svg { width: 17px; height: 17px; }
.heads { display: flex; height: 112px; margin: 11px 29px 0 32px; }
.logo { display: flex; align-items: center; gap: 9px; width: 176px; font: 700 35px/40px "Liberation Sans", sans-serif; color: #652d90; }
.logo svg { width: 52px; height: 54px; }
.forum-card { width: 225px; border: 1px solid #cfcfcf; border-radius: 0 12px 0 12px; background: #fff; font: 700 37px/112px "Liberation Sans", sans-serif; color: #111; text-align: center; }
.banner { --hole: #6b2c91; display: flex; flex: 1; align-items: center; justify-content: center; gap: 9px; margin-left: 9px; padding: 2px 16px 0 0; border-radius: 0 12px 0 12px; background: #6b2c91; font: 700 22px/28px "Liberation Sans", sans-serif; color: #fff; }
.banner svg { width: 48px; height: 48px; fill: #fff; }
.banner em { font-style: normal; color: #2ea3df; }
.cols { display: flex; gap: 7px; margin: 10px 29px 0 27px; }
.content { flex: 1; min-width: 0; padding: 20px 5px 0 7px; border-radius: 10px 10px 0 0; background: #fff; }
.visited { line-height: 20px; }
.usernav { display: flex; align-items: center; height: 47px; padding-left: 13px; border: 1px solid #d6d6d6; background: #e9e9e9; }
.usernav > * { white-space: nowrap; }
.usernav > :not(:first-child) { margin-left: 13px; padding-left: 12px; border-left: 1px solid #6e9ccc; line-height: 14px; }
.usernav > .logout { margin-left: auto; margin-right: 51px; border: 0; padding: 0; }
.forum-search { display: flex; justify-content: flex-end; gap: 6px; margin-top: 13px; }
.forum-search input { width: 300px; height: 23px; border: 1px solid #ccc; }
.forum-search button { width: 38px; height: 21px; margin-top: 1px; border: 1px solid #ddd; background: #ececec; color: #542786; line-height: 18px; }
.advanced { display: block; height: 18px; margin-right: 179px; line-height: 18px; text-align: right; }
.topic { display: flex; justify-content: space-between; }
.topic h2 { font-size: 20px; line-height: 24px; color: #542786; }
.crumbs { line-height: 20px; }
.feed { display: flex; gap: 4px; align-items: center; height: 20px; margin-top: 9px; color: #ee8848; font: 18px/20px "Open Sans", sans-serif; }
.feed svg { width: 15px; height: 15px; }
.mods { margin-top: 14px; line-height: 20px; }
.pager { display: flex; height: 28px; margin-top: 4px; }
.pager button { width: 120px; height: 24px; margin: 1px 6px 0 0; border: 1px solid #a9adb1; background: #e9ebed; color: #5f7890; }
.pager span { white-space: nowrap; line-height: 24px; }
.pager .dots { margin-left: auto; }
.num { width: 28px; height: 20px; margin: 2px 150px 0 7px; border: 1px solid #ccd4df; background: #edf2fb; line-height: 18px; text-align: center; }
.views { margin-top: 2px; padding-left: 6px; line-height: 24px; white-space: nowrap; }
.post { display: flex; margin-top: 2px; border: 1px solid #ccd6dd; border-bottom: 0; background: #fafdff; }
.post aside { width: 227px; padding: 15px 0 0 24px; color: #666; line-height: 16px; }
.post aside span { color: #000; }
.post aside b { color: #3a3a3a; }
.author { display: block; height: 36px; line-height: 20px; }
.post aside p { margin-bottom: 28px; }
.pill { width: 68px; height: 21px; border: 1px solid #b9b9b9; border-radius: 6px; background: linear-gradient(#fff, #ededed); color: #8f8f8f; font: 12px/18px "Liberation Sans", sans-serif; }
.body { flex: 1; min-width: 0; padding: 11px 13px 20px 0; }
.body header { display: flex; justify-content: space-between; margin-bottom: 14px; }
.body h3 { font: 700 16px/22px "Liberation Sans", sans-serif; color: #542786; }
.date { display: flex; align-items: center; gap: 8px; height: 26px; padding-left: 1px; }
.date svg { width: 10px; height: 12px; }
.actions { display: flex; gap: 8px; margin-top: 14px; height: 21px; }
.act { width: 20px; height: 20px; }
.actions .pill { margin-left: 12px; background: #fff; }
.para { margin-top: 21px; white-space: nowrap; }
header + .para { margin-top: 0; }
.side { --hole: #fff; width: 227px; padding: 15px 0 13px 13px; margin-bottom: 9px; border-radius: 10px; background: #fff; white-space: nowrap; }
.side h4 { display: flex; align-items: center; gap: 8px; height: 39px; font-size: 13px; color: #542786; }
.side h4 svg { width: 26px; height: 26px; fill: #652d90; }
.side .wide h4 { gap: 10px; }
.side .wide h4 svg { width: 32px; height: 28px; margin-left: 4px; }
.side section > a { display: block; margin-top: 6px; }

.scroll { display: flex; flex-direction: column; gap: 2px; width: 18px; margin-right: 2px; padding: 1px 0; background: linear-gradient(90deg, #eeede5, #fefefb); }
.sb, .thumb { border: 1px solid #fff; border-radius: 2px; background: #98ab7e; outline: 1px solid #90a378; outline-offset: -2px; }
.sb { width: 17px; height: 17px; }
.sb svg { width: 15px; height: 15px; }
.sb .up { transform: rotate(180deg); }
.sb.end { margin-top: auto; }
.thumb { display: grid; place-items: center; width: 17px; height: 100px; background: linear-gradient(90deg, #a9b98f, #8ea276); }
.thumb i { width: 6px; height: 7px; background: repeating-linear-gradient(#e7edd6 0 1px, #8ea276 1px 2px); }

.status { display: flex; align-items: center; height: 22px; border-top: 1px solid #aaa795; background: #ece9d8; color: #000; font: 700 15px/20px "DejaVu Sans", sans-serif; }
.msg { width: 570px; padding-left: 2px; white-space: nowrap; }
.progress { width: 94px; height: 17px; margin-left: 4px; padding: 2px; border: 1px solid #777; border-radius: 3px; background: #fff; }
.progress i { display: block; width: 7px; height: 11px; background: #e2743c; }
.sep { width: 24px; height: 18px; border-right: 1px solid #cbc8b5; }
.zone { display: flex; align-items: center; gap: 4px; margin-left: 29px; }
.protect { display: flex; align-items: center; gap: 15px; margin-left: auto; padding: 0 12px 0 10px; border-left: 1px solid #cbc8b5; }
.zoom { display: flex; align-items: center; gap: 2px; padding-left: 11px; border-left: 1px solid #cbc8b5; font: 13px/20px Roboto, sans-serif; }
.zoom .tri { margin: 0 19px 0 22px; }
.size { width: 12px; height: 12px; margin-right: 1px; align-self: flex-end; }

.taskbar { display: flex; flex-direction: column; width: 36px; background: linear-gradient(90deg, #7f9360 0, #c6d29c 5%, #a9b67f 25%, #a9b67f 70%, #c4d096 90%, #8c9c68); }
.start { display: grid; place-items: center; width: 33px; height: 34px; padding-left: 6px; border: 1px solid #5a7c46; border-radius: 0 0 5px 0; background: linear-gradient(90deg, #6f9a58, #7da264 60%, #58803f); }
.start svg { width: 20px; height: 20px; }
.task { display: grid; place-items: center; width: 33px; height: 29px; margin: 8px 0 0 1px; padding-left: 3px; border: 1px solid #dbe3bc; border-radius: 3px; background: #c3ce9a; }
.task + .task { margin-top: 2px; }
.task.on { border-color: #6d7b55; background: #8a9870; }
.lang { width: 17px; height: 16px; margin: auto 0 15px 8px; background: #94a178; color: #fff; font: 12px/16px "DejaVu Sans Condensed", sans-serif; text-align: center; }
.tray { height: 66px; padding: 9px 0 0 1px; border-top: 1px solid #8a7f4b; background: linear-gradient(90deg, #e9e3b4, #e6dfae 80%, #d9c98c); }
.tray time { display: block; margin-top: 10px; font: 12px/14px "DejaVu Sans Condensed", Tahoma, sans-serif; color: #4b4526; }

.dialog { position: absolute; left: 481px; top: 352px; width: 281px; height: 319px; border: 2px solid #7d9160; border-top: 0; border-radius: 7px 7px 0 0; background: #ece9d8; color: #000; font: 11px/13px Roboto, Tahoma, sans-serif; }
.dialog header { display: flex; align-items: center; height: 33px; margin: 0 -2px; padding: 2px 4px 0 5px; border: 1px solid #7d9160; border-bottom: 2px solid #93a672; border-radius: 7px 7px 0 0; background: linear-gradient(#d9e2b5, #a1b177 25%, #abba80 60%, #bdc991); }
.dialog h2 { flex: 1; font: 600 20px/28px "Noto Sans", sans-serif; color: #fff; text-shadow: 1px 1px 1px #3b4a22; white-space: nowrap; }
.dialog header button { width: 25px; height: 25px; border: 1px solid #fff; border-radius: 3px; background: #cf5637; }
.dlg { padding: 12px 11px 0 12px; }
.intro { display: flex; height: 49px; }
.intro svg { width: 32px; height: 26px; margin-top: 3px; }
.intro p { margin-left: 28px; white-space: normal; }
.row { display: flex; align-items: center; margin-top: -4px; }
.row label { width: 75px; }
.select { position: relative; flex: 1; height: 21px; background: #fff; }
.select select { width: 100%; height: 21px; padding: 0 2px; border: 1px solid #a3b18a; background: none; font: 11px/19px Roboto, sans-serif; color: #000; appearance: none; }
.select i { position: absolute; right: 2px; top: 2px; width: 17px; height: 17px; border-radius: 2px; background: #93a878; pointer-events: none; }
.select svg { width: 17px; height: 17px; }
.check { display: flex; align-items: center; gap: 3px; margin: 17px 0 0 75px; }
.check input { width: 13px; height: 13px; margin: 0; border: 1px solid #1c5180; background: #f3f3ef; appearance: none; }
.btns { display: flex; align-items: flex-start; gap: 12px; margin: 21px 0 22px 1px; }
.btns button { width: 73px; height: 21px; border: 1px solid #37621b; border-radius: 3px; background: linear-gradient(#fff, #f0efdf); line-height: 18px; }
.btns .def { box-shadow: inset 0 0 0 2px #a8c170; }
.btns .last { margin: -1px 2px 0 auto; }
.log { height: 78px; padding: 3px 4px; border: 1px solid #a3b18a; }
</style>
